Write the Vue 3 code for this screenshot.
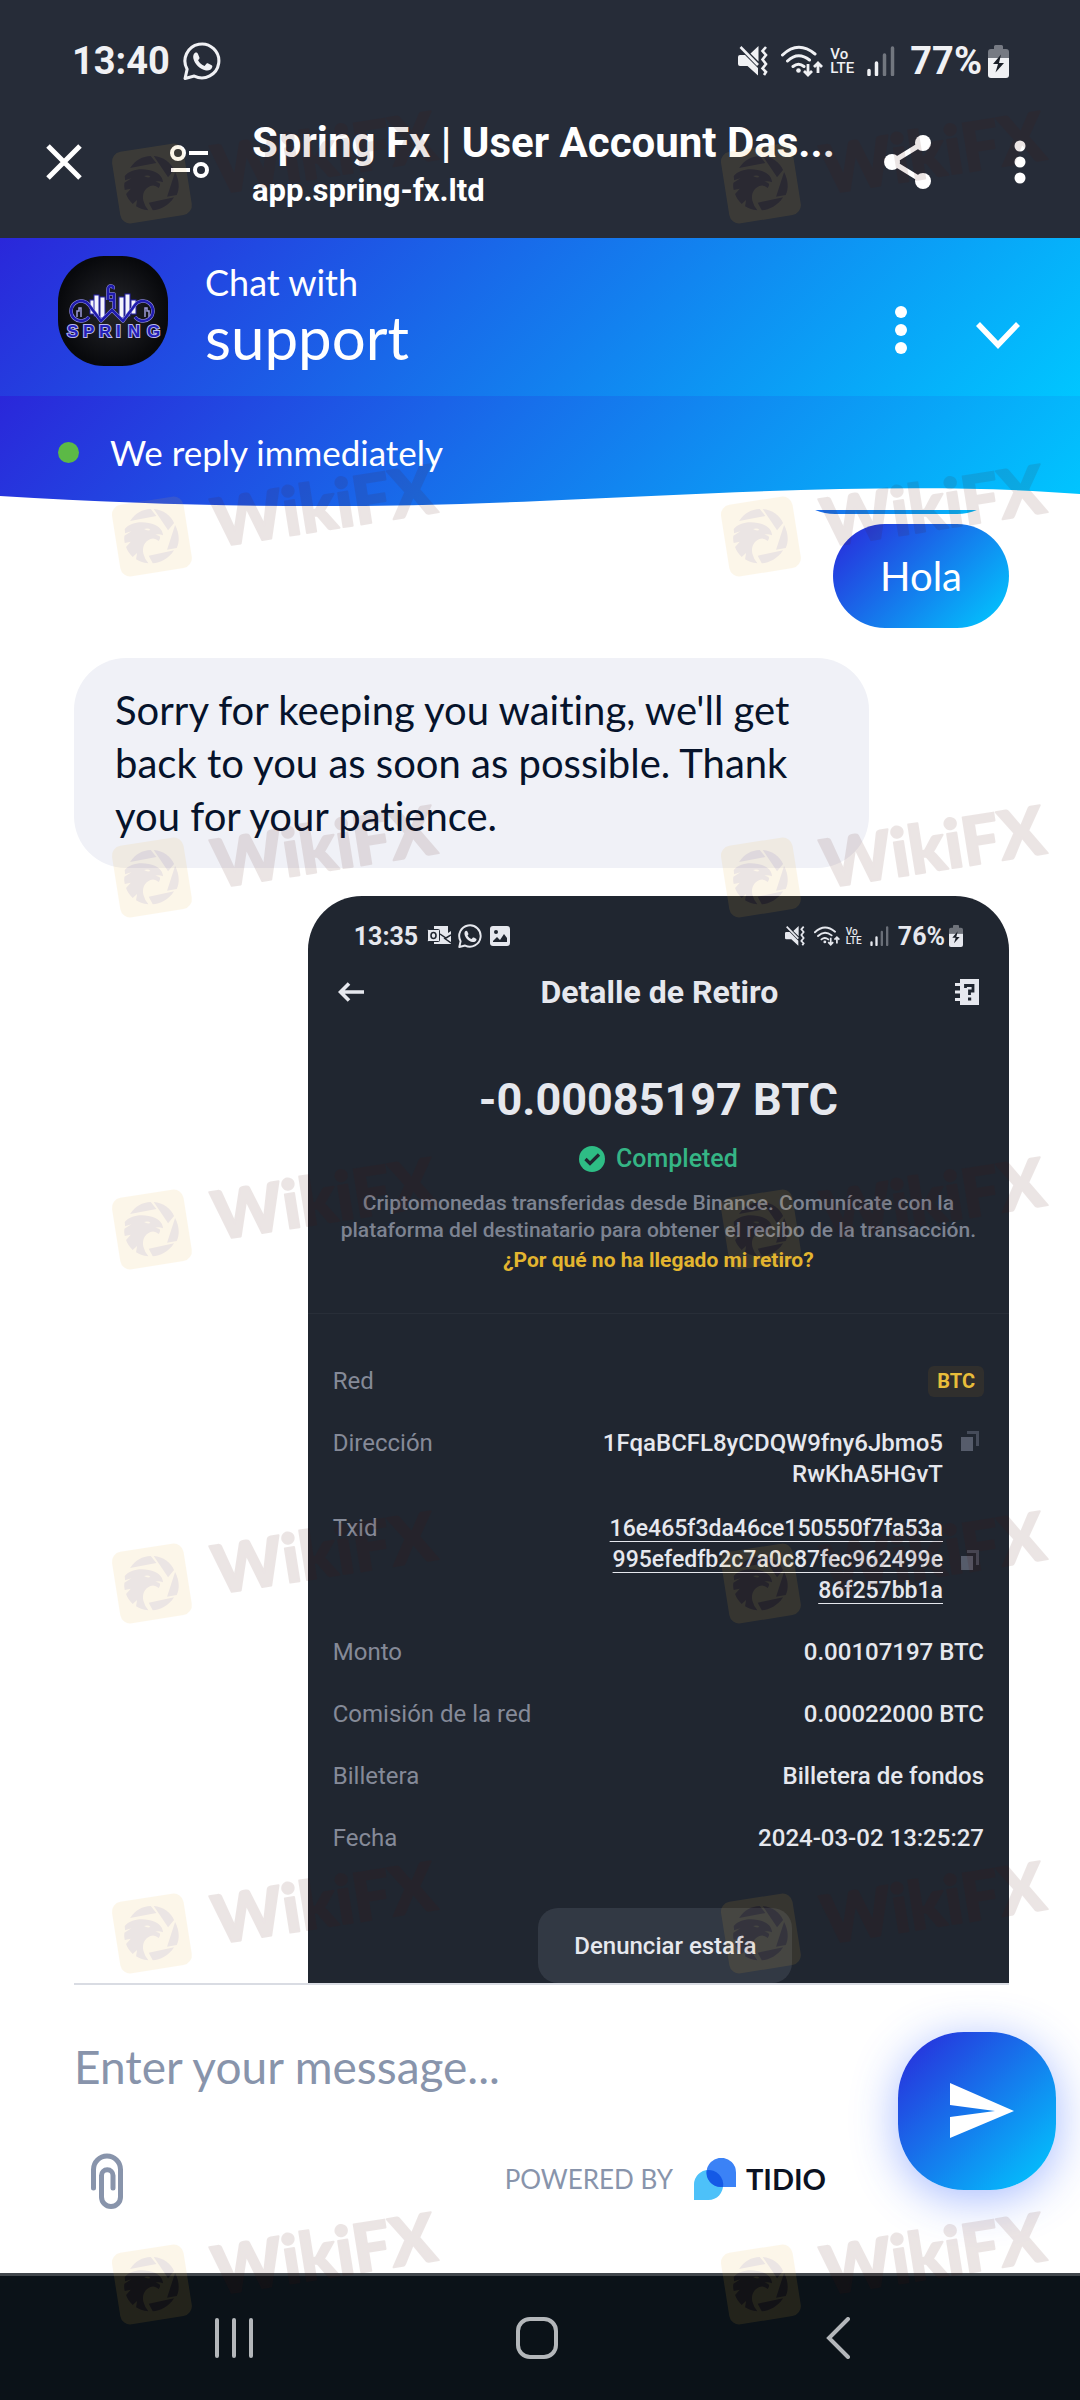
<script setup>
import { ref } from 'vue'

const message = ref('')

const bars = [
  { x: 32, y: 44, h: 14 },
  { x: 36, y: 39, h: 21 },
  { x: 42, y: 41, h: 21 },
  { x: 61, y: 41, h: 21 },
  { x: 67, y: 38, h: 22 },
  { x: 73, y: 44, h: 14 },
]

const rows = [
  { label: 'Monto', value: '0.00107197 BTC' },
  { label: 'Comisión de la red', value: '0.00022000 BTC' },
  { label: 'Billetera', value: 'Billetera de fondos' },
  { label: 'Fecha', value: '2024-03-02 13:25:27' },
]

const marks = [110, 463, 804, 1156, 1510, 1860, 2211].flatMap((top) =>
  [111, 720].map((left) => ({ top, left })),
)
</script>

<template>
  <div class="phone">
    <svg width="0" height="0" class="defs" aria-hidden="true">
      <symbol id="whatsapp" viewBox="0 0 37 37">
        <path d="M2 35.500 4 26.500A16.500 16.500 0 1 1 11 33.200Z" fill="none" stroke="currentColor" stroke-width="3" stroke-linejoin="round" />
        <path d="M10.500 12c1-2 3-2.500 4-.5l1.500 3.500c.3 1-.5 1.800-1.300 2.700 1.500 2.800 3.500 4.500 6.300 5.600l2-2.300c.6-.5 1-.4 1.600-.1l3.300 1.700c.8.5.8 1 .5 2-.8 2.500-3.500 3.600-6 3.100-6.500-1.400-11-6.300-12.300-11.700-.3-1.500-.2-2.900.4-4z" fill="currentColor" />
      </symbol>
      <symbol id="mute" viewBox="0 0 30 30">
        <path d="M2 9h5l13 13v7.500L9.500 20H2q-2 0-2-2v-7q0-2 2-2zM20.500 0v15.500L12.500 7.500z" fill="currentColor" />
        <path d="M2.500 1 20 19" stroke="currentColor" stroke-width="2.600" />
        <path d="m28 1-3.500 4 3.500 4-3.500 4.500L28 18l-3.500 4.500L28 26l-2 3" fill="none" stroke="currentColor" stroke-width="2.600" />
      </symbol>
      <symbol id="wifi" viewBox="0 0 42 32">
        <path d="M1.500 10Q17 -5 34 9M6.500 16Q17 6 28.500 15M12 21.500q5.500-4.500 11 0" fill="none" stroke="currentColor" stroke-width="3" stroke-linecap="round" />
        <circle cx="17.500" cy="25.500" r="2.300" fill="currentColor" />
        <path d="M27 19v11m-4-4 4 4 4-4M37 28V18m-4 4 4-4 4 4" fill="none" stroke="currentColor" stroke-width="2.800" />
      </symbol>
      <symbol id="signal" viewBox="0 0 28 30">
        <path d="M2 24.500v4M9.500 17v11.500" stroke="currentColor" stroke-width="3.500" stroke-linecap="round" />
        <path d="M17.500 9v19.500M25.500 2v26.500" stroke="currentColor" stroke-opacity=".38" stroke-width="3.500" stroke-linecap="round" />
      </symbol>
      <symbol id="battery" viewBox="0 0 21 33">
        <path d="M0 13V7q0-3 3-3h3V1.500Q6 0 7.500 0h6Q15 0 15 1.500V4h3q3 0 3 3v6z" fill="currentColor" opacity=".4" />
        <path d="M0 13h21v17q0 3-3 3H3q-3 0-3-3z" fill="currentColor" />
        <path d="M13 9.500 5 19h5l-2.500 8.500L16 18h-5z" fill="#1a1f28" />
      </symbol>
      <symbol id="copy" viewBox="0 0 18 20">
        <path d="M0 6h12v14H0z" fill="#565c6b" />
        <path d="M6 1.500h10.500V15" fill="none" stroke="#464c5a" stroke-width="3" />
      </symbol>
    </svg>

    <div class="status">
      <span class="time">13:40</span>
      <svg class="wa"><use href="#whatsapp" /></svg>
      <span class="fill"></span>
      <svg class="mute"><use href="#mute" /></svg>
      <svg class="wifi"><use href="#wifi" /></svg>
      <span class="volte"><span>Vo</span><span>LTE</span></span>
      <svg class="signal"><use href="#signal" /></svg>
      <span class="percent">77%</span>
      <svg class="battery"><use href="#battery" /></svg>
    </div>

    <header class="toolbar">
      <button class="close" aria-label="Close">
        <svg width="36" height="36" viewBox="0 0 36 36"><path d="M2 2l32 32M34 2 2 34" stroke="#fff" stroke-width="5" /></svg>
      </button>
      <button class="tune" aria-label="Site settings">
        <svg width="39" height="34" viewBox="0 0 39 34" fill="none" stroke="#fff" stroke-width="4">
          <circle cx="8" cy="8" r="6" /><circle cx="31" cy="25" r="6" /><path d="M19 8h19M1 25h19" />
        </svg>
      </button>
      <div class="page">
        <div class="page-title">Spring Fx | User Account Das...</div>
        <div class="page-url">app.spring-fx.ltd</div>
      </div>
      <button class="share" aria-label="Share">
        <svg width="47" height="54" viewBox="0 0 47 54" fill="#fff">
          <path d="M39 8 8 27l31 19" fill="none" stroke="#fff" stroke-width="5" />
          <circle cx="39" cy="8" r="8" /><circle cx="8" cy="27" r="8" /><circle cx="39" cy="46" r="8" />
        </svg>
      </button>
      <button class="more" aria-label="More">
        <svg width="12" height="44" viewBox="0 0 12 44" fill="#fff"><circle cx="6" cy="6" r="5.500" /><circle cx="6" cy="22" r="5.500" /><circle cx="6" cy="38" r="5.500" /></svg>
      </button>
    </header>

    <section class="chat-head">
      <svg class="avatar" viewBox="0 0 110 110" role="img" aria-label="Spring">
        <defs>
          <radialGradient id="av"><stop offset="0" stop-color="#25262b" /><stop offset="1" stop-color="#08090c" /></radialGradient>
        </defs>
        <rect width="110" height="110" fill="url(#av)" />
        <g fill="#f4f4fa" stroke="#2420a8" stroke-width="1">
          <rect v-for="b in bars" :key="b.x" :x="b.x" :y="b.y" width="5" :height="b.h" />
        </g>
        <path d="M19 61v-6h2v-3h2v9M91 61v-6h-2v-3h-2v9" fill="none" stroke="#9d9ad8" stroke-width="1.500" />
        <g fill="none" stroke-linejoin="round">
          <g stroke="#9c9ae0" stroke-width="3.500">
            <path d="M31 61A10 10 0 1 1 31 49L43 65 54 54 65 65 77 49A10 10 0 1 1 77 61" />
            <path d="M50 44v-10q0-4 3-4t2 3M51 38h5v15M51 44h5" />
          </g>
          <g stroke="#201cae" stroke-width="2.500">
            <path d="M31 61A10 10 0 1 1 31 49L43 65 54 54 65 65 77 49A10 10 0 1 1 77 61" />
            <path d="M50 44v-10q0-4 3-4t2 3M51 38h5v15M51 44h5" />
          </g>
        </g>
        <text class="avatar-name" x="9 25 41 58 70 89" y="81">SPRING</text>
      </svg>
      <div class="who">
        <div class="who-small">Chat with</div>
        <div class="who-big">support</div>
      </div>
      <button class="opts" aria-label="Options">
        <svg width="12" height="48" viewBox="0 0 12 48" fill="#fff"><circle cx="6" cy="6" r="6" /><circle cx="6" cy="24" r="6" /><circle cx="6" cy="42" r="6" /></svg>
      </button>
      <button class="minimise" aria-label="Minimise">
        <svg width="44" height="28" viewBox="0 0 44 28"><path d="m2 2 20 21L42 2" fill="none" stroke="#fff" stroke-width="5.500" /></svg>
      </button>
    </section>

    <section class="reply">
      <span class="dot"></span>
      <span>We reply immediately</span>
      <svg class="wave" viewBox="0 0 1080 20" preserveAspectRatio="none" aria-hidden="true">
        <path d="M0 9C200 21 360 22 540 14S920 -6 1080 7V20H0Z" fill="#fff" />
      </svg>
    </section>

    <main class="messages">
      <div class="earlier"><div class="bubble mine"></div></div>
      <div class="bubble mine hola">Hola</div>
      <div class="bubble theirs">Sorry for keeping you waiting, we'll get back to you as soon as possible. Thank you for your patience.</div>

      <article class="receipt">
        <div class="mini-status">
          <span class="mini-time">13:35</span>
          <svg class="outlook" width="24" height="20" viewBox="0 0 24 20">
            <path d="M7 0h14v7l3-2v13H7z" fill="#e6e8ee" /><path d="M13 8l6 4 5-3M24 17l-7-5" stroke="#202630" stroke-width="1.500" fill="none" />
            <rect x=".5" y="3.500" width="12" height="12" rx="1" fill="#e6e8ee" stroke="#202630" /><ellipse cx="6.500" cy="9.500" rx="2.500" ry="3" fill="none" stroke="#202630" stroke-width="1.600" />
          </svg>
          <svg class="mini-wa"><use href="#whatsapp" /></svg>
          <svg width="20" height="20" viewBox="0 0 20 20"><rect width="20" height="20" rx="3" fill="#e6e8ee" /><path d="M3 15l4-4 3 3 4-6 3 4v4H3z" fill="#202630" /><circle cx="6" cy="6" r="2" fill="#202630" /></svg>
          <span class="fill"></span>
          <svg class="mini-mute"><use href="#mute" /></svg>
          <svg class="mini-wifi"><use href="#wifi" /></svg>
          <span class="mini-volte"><span>Vo</span><span>LTE</span></span>
          <svg class="mini-signal"><use href="#signal" /></svg>
          <span class="mini-percent">76%</span>
          <svg class="mini-battery"><use href="#battery" /></svg>
        </div>
        <div class="receipt-bar">
          <svg width="26" height="20" viewBox="0 0 26 20"><path d="M26 10H3M11 1.500 2.500 10l8.500 8.500" fill="none" stroke="#e6e8ee" stroke-width="3.600" /></svg>
          <h2>Detalle de Retiro</h2>
          <svg width="24" height="26" viewBox="0 0 24 26">
            <path d="M5 0h19v26H5v-4H0v-3h5v-4.500H0v-3h5V7H0V4h5z" fill="#e6e8ee" />
            <path d="M10.500 9V6.500h7.500V12h-3.500v4" fill="none" stroke="#202630" stroke-width="2.800" /><path d="M13 18.500h3.200v3H13z" fill="#202630" />
          </svg>
        </div>
        <div class="amount">-0.00085197 BTC</div>
        <div class="done">
          <svg width="26" height="26" viewBox="0 0 26 26"><circle cx="13" cy="13" r="13" fill="#2ebd85" /><path d="m6.500 13 4.500 4.500 9-9" fill="none" stroke="#202630" stroke-width="3.200" /></svg>
          <span>Completed</span>
        </div>
        <p class="note">Criptomonedas transferidas desde Binance. Comunícate con la<br />plataforma del destinatario para obtener el recibo de la transacción.</p>
        <a class="why" href="#">¿Por qué no ha llegado mi retiro?</a>
        <dl class="details">
          <div class="row"><dt>Red</dt><dd><span class="badge">BTC</span></dd></div>
          <div class="row address">
            <dt>Dirección</dt>
            <dd class="long">1FqaBCFL8yCDQW9fny6Jbmo5<br />RwKhA5HGvT</dd>
            <svg class="copy"><use href="#copy" /></svg>
          </div>
          <div class="row txid">
            <dt>Txid</dt>
            <dd class="long"><a href="#">16e465f3da46ce150550f7fa53a<br />995efedfb2c7a0c87fec962499e<br />86f257bb1a</a></dd>
            <svg class="copy"><use href="#copy" /></svg>
          </div>
          <div v-for="r in rows" :key="r.label" class="row"><dt>{{ r.label }}</dt><dd>{{ r.value }}</dd></div>
        </dl>
        <button class="report">Denunciar estafa</button>
      </article>
    </main>

    <form class="composer" @submit.prevent>
      <div class="compose-main">
        <input v-model="message" type="text" placeholder="Enter your message..." aria-label="Enter your message" />
        <div class="tools">
          <button type="button" class="attach" aria-label="Attach file">
            <svg width="32" height="56" viewBox="0 0 32 56"><path d="M2.500 35V16.500a13.500 13.500 0 0 1 27 0V44a9.500 9.500 0 0 1-19 0V22.500a5.700 5.700 0 0 1 11.500 0V35" fill="none" stroke="#8894ab" stroke-width="5" stroke-linecap="round" /></svg>
          </button>
          <a class="powered" href="#">
            <span>POWERED BY</span>
            <svg width="42" height="42" viewBox="0 0 42 42">
              <path d="M0 42V26.500a14.500 14.500 0 0 1 29 0A14.500 14.500 0 0 1 14.500 42z" fill="#4dc1f9" />
              <path d="M42 29V14.500a14.700 14.700 0 1 0-29.400 0A14.500 14.500 0 0 0 27 29z" fill="#3b82f6" />
              <path d="M12.600 12.200A14.500 14.500 0 0 1 29 29h-2A14.500 14.500 0 0 1 12.600 12.200z" fill="#1459e6" />
            </svg>
            <strong>TIDIO</strong>
          </a>
        </div>
      </div>
      <button class="send" aria-label="Send">
        <svg width="64" height="56" viewBox="0 0 64 56"><path d="M0 0 64 28 0 55V34l45-6L0 22z" fill="#fff" /></svg>
      </button>
    </form>

    <nav class="system">
      <button aria-label="Recents"><svg width="38" height="42" viewBox="0 0 38 42"><path d="M2 3v36M19 3v36M36 3v36" stroke="#b4b7ba" stroke-width="4" stroke-linecap="round" /></svg></button>
      <button aria-label="Home"><svg width="42" height="42" viewBox="0 0 42 42"><rect x="2" y="2" width="38" height="38" rx="12" fill="none" stroke="#b4b7ba" stroke-width="4" /></svg></button>
      <button aria-label="Back"><svg width="30" height="42" viewBox="0 0 30 42"><path d="M28 2 9 21l19 19" fill="none" stroke="#b4b7ba" stroke-width="4" stroke-linecap="round" /></svg></button>
    </nav>

    <div class="watermarks" aria-hidden="true">
      <svg v-for="m in marks" :key="m.top + '-' + m.left" class="mark" viewBox="0 0 332 120" :style="{ top: m.top + 'px', left: m.left + 'px' }">
        <g transform="translate(-21.600 -16) scale(.33333)">
          <rect x="79" y="160" width="217" height="217" rx="30" transform="rotate(-9 187 268)" fill="#ecb337" />
          <g fill="#50120a">
            <path d="M122 222C138 198 158 187 184 186L201 207Z" />
            <path d="M193 186C222 189 244 205 254 228L236 250Z" />
            <path d="M257 234C270 258 271 285 262 303L233 308Z" />
            <path d="M254 310C238 335 212 348 190 349L178 326Z" />
            <path d="M106 246C120 228 150 222 178 228C205 232 220 247 221 265Q208 260 198 263C216 266 214 272 208 282Q196 271 183 276C164 284 158 302 162 320Q166 336 177 349C160 348 148 342 140 337L143 318 130 330C120 320 113 310 110 300L124 284 106 288Q103 276 105 266L126 253 107 259Z" />
          </g>
          <path d="M164 246q14-4 19 3-9 4-19-3z" fill="#ecb337" />
        </g>
        <text class="mark-text" x="213" y="67" text-anchor="middle" transform="rotate(-9 213 44)">WikiFX</text>
      </svg>
    </div>
  </div>
</template>

<style>
body {
  margin: 0;
  background: #fff;
}
</style>

<style scoped>
.phone {
  position: relative;
  display: flex;
  flex-direction: column;
  min-height: 100vh;
  overflow: hidden;
  background: #fff;
  font-family: Lato, "Open Sans", sans-serif;
  font-variant-ligatures: none;
}
.defs {
  position: absolute;
}
button {
  display: flex;
  padding: 0;
  border: 0;
  background: none;
  cursor: pointer;
}
svg {
  display: block;
  flex: none;
}
.fill {
  flex: 1;
}

/* system status bar */
.status {
  display: flex;
  align-items: center;
  height: 42px;
  padding: 40px 71px 0 72px;
  background: #262c38;
  color: #f0f1f4;
  font: 700 38px/42px Roboto, sans-serif;
}
.wa {
  width: 38px;
  height: 38px;
  margin-left: 13px;
}
.mute {
  width: 30px;
  height: 30px;
  margin-right: 13px;
}
.wifi {
  width: 42px;
  height: 32px;
  margin-right: 7px;
}
.volte {
  display: flex;
  flex-direction: column;
  width: 26px;
  margin-right: 11px;
  font: 500 15px/14px Roboto, sans-serif;
}
.signal {
  width: 28px;
  height: 30px;
  margin-right: 15px;
}
.battery {
  width: 21px;
  height: 33px;
  margin-left: 6px;
}

/* browser toolbar */
.toolbar {
  display: flex;
  align-items: center;
  height: 152px;
  padding: 4px 54px 0 46px;
  background: #262c38;
  color: #fff;
  font-family: Roboto, sans-serif;
}
.tune {
  margin-left: 88px;
}
.page {
  flex: 1;
  min-width: 0;
  margin-left: 43px;
  padding-top: 4px;
  white-space: nowrap;
}
.page-title {
  font-weight: 700;
  font-size: 42px;
  line-height: 52px;
}
.page-url {
  padding-top: 2px;
  font-weight: 700;
  font-size: 31px;
  line-height: 40px;
}
.more {
  margin-left: 83px;
}

/* chat header */
.chat-head {
  display: flex;
  align-items: flex-start;
  height: 140px;
  padding: 18px 60px 0 58px;
  background: linear-gradient(135deg, #2a27da, #00c6ff);
  color: #fff;
}
.avatar {
  width: 110px;
  height: 110px;
  border-radius: 46px;
}
.avatar-name {
  font: 700 17px "Liberation Sans", sans-serif;
  fill: #2420b8;
  stroke: #b9b8ee;
  stroke-width: 2px;
  paint-order: stroke;
}
.who {
  flex: 1;
  margin-left: 37px;
  padding-top: 4px;
}
.who-small {
  font-size: 36px;
  line-height: 44px;
}
.who-big {
  font-size: 60px;
  line-height: 66px;
}
.opts {
  margin-top: 50px;
}
.minimise {
  margin-top: 66px;
  margin-left: 69px;
}
.reply {
  position: relative;
  display: flex;
  align-items: center;
  padding: 34px 58px 32px;
  background: linear-gradient(135deg, #2a27da, #00c6ff);
  color: #fff;
  font-size: 35px;
  line-height: 44px;
}
.dot {
  width: 21px;
  height: 21px;
  margin-right: 31px;
  border-radius: 50%;
  background: #5cb946;
}
.wave {
  position: absolute;
  bottom: -1px;
  left: 0;
  width: 100%;
  height: 20px;
}

/* conversation */
.messages {
  display: flex;
  flex-direction: column;
  align-items: flex-end;
  margin: 4px 71px 0 74px;
  border-bottom: 2px solid #d9dce3;
}
.bubble {
  box-sizing: border-box;
  padding: 26px 41px 25px;
  border-radius: 52px;
  font-size: 40px;
  line-height: 53px;
}
.mine {
  min-width: 176px;
  background: linear-gradient(135deg, #2a27da, #00ccff);
  color: #fff;
  text-align: center;
}
.earlier {
  display: flex;
  align-items: flex-end;
  height: 4px;
  overflow: hidden;
}
.earlier .bubble {
  width: 226px;
  height: 105px;
}
.hola {
  margin-top: 10px;
}
.theirs {
  align-self: flex-start;
  width: 85%;
  margin: 30px 0 28px;
  background: #f0f1f7;
  color: #06132b;
}

/* receipt picture */
.receipt {
  display: flex;
  flex-direction: column;
  align-items: center;
  box-sizing: border-box;
  width: 75%;
  padding-top: 26px;
  border-radius: 54px 54px 0 0;
  background: #202630;
  color: #e6e8ee;
  font-family: Roboto, sans-serif;
}
.mini-status {
  display: flex;
  align-items: center;
  align-self: stretch;
  height: 28px;
  padding: 0 46px 0 46px;
  font-weight: 700;
  font-size: 25px;
}
.outlook {
  margin-left: 9px;
}
.mini-wa {
  width: 24px;
  height: 24px;
  margin: 0 8px 0 7px;
}
.mini-mute {
  width: 20px;
  height: 20px;
  margin-right: 9px;
}
.mini-wifi {
  width: 26px;
  height: 20px;
  margin-right: 6px;
}
.mini-volte {
  display: flex;
  flex-direction: column;
  width: 17px;
  margin-right: 7px;
  font-weight: 500;
  font-size: 10px;
  line-height: 9px;
}
.mini-signal {
  width: 19px;
  height: 20px;
  margin-right: 9px;
}
.mini-battery {
  width: 14px;
  height: 22px;
  margin-left: 4px;
}
.receipt-bar {
  display: flex;
  align-items: center;
  justify-content: space-between;
  align-self: stretch;
  height: 40px;
  margin-top: 22px;
  padding: 0 30px;
}
h2 {
  margin: 0;
  font-weight: 700;
  font-size: 32px;
  line-height: 40px;
}
.amount {
  margin-top: 60px;
  font-weight: 700;
  font-size: 45px;
  line-height: 56px;
}
.done {
  display: flex;
  align-items: center;
  gap: 11px;
  margin-top: 15px;
  color: #35b585;
  font-weight: 500;
  font-size: 25px;
  line-height: 32px;
}
.note {
  margin: 15px 0 0;
  color: #7d8391;
  font-weight: 500;
  font-size: 21px;
  line-height: 27px;
  text-align: center;
  white-space: nowrap;
}
.why {
  margin-top: 2px;
  color: #e3b52f;
  font-weight: 700;
  font-size: 21px;
  line-height: 29px;
  text-decoration: none;
}
.details {
  align-self: stretch;
  margin: 38px 0 0;
  padding: 52px 25px 0;
  border-top: 1px solid #282e38;
  font-size: 24px;
  line-height: 31px;
}
.row {
  display: flex;
  align-items: flex-start;
  margin-bottom: 31px;
}
dt {
  flex: 1;
  color: #858a98;
}
dd {
  margin: 0;
  font-weight: 500;
  text-align: right;
}
.address {
  margin-bottom: 23px;
}
.badge {
  display: block;
  padding: 0 9px;
  border-radius: 6px;
  background: #302f2d;
  color: #e8bd3a;
  font-weight: 700;
  font-size: 20px;
}
.long {
  margin-right: 18px;
}
.txid .long {
  font-size: 23px;
}
.long a {
  color: inherit;
  text-underline-offset: 5px;
  text-decoration-thickness: 1px;
}
.copy {
  width: 18px;
  height: 20px;
  margin: 3px 5px 0 0;
}
.txid .copy {
  align-self: center;
  margin-top: 0;
}
.report {
  height: 75px;
  margin: 23px 0 0 14px;
  padding: 0 36px;
  align-items: center;
  border-radius: 20px;
  background: #323944;
  color: #e6e8ee;
  font: 500 24px/32px Roboto, sans-serif;
}

/* composer */
.composer {
  display: flex;
  align-items: flex-start;
  padding: 47px 24px 64px 74px;
}
.compose-main {
  flex: 1;
  padding-top: 7px;
}
input {
  display: block;
  box-sizing: border-box;
  width: 100%;
  height: 56px;
  padding: 0;
  border: 0;
  outline: 0;
  background: none;
  color: #06132b;
  font: 46px/56px Lato, "Open Sans", sans-serif;
}
input::placeholder {
  color: #8894ab;
  opacity: 1;
}
.tools {
  display: flex;
  align-items: center;
  justify-content: space-between;
  margin-top: 58px;
  padding: 0 72px 0 17px;
}
.powered {
  display: flex;
  align-items: center;
  margin-bottom: 4px;
  color: #8894ab;
  font-size: 26px;
  line-height: 36px;
  text-decoration: none;
}
.powered svg {
  margin: 0 10px 0 21px;
}
.powered strong {
  color: #0b1222;
  font-size: 29px;
}
.send {
  align-items: center;
  justify-content: center;
  width: 158px;
  height: 158px;
  padding-left: 10px;
  border-radius: 66px;
  background: linear-gradient(135deg, #2a27da, #00ccff);
  box-shadow: 0 8px 46px rgba(40, 90, 255, 0.42);
}

/* system navigation */
.system {
  display: flex;
  flex: 1;
  align-items: center;
  justify-content: space-between;
  min-height: 123px;
  padding: 0 230px 0 215px;
  border-top: 3px solid #42474c;
  box-sizing: border-box;
  background: #0b1218;
}

/* watermark layer */
.watermarks {
  position: absolute;
  inset: 0;
  overflow: hidden;
  pointer-events: none;
}
.mark {
  position: absolute;
  width: 332px;
  height: 120px;
  overflow: visible;
  opacity: 0.105;
}
.mark-text {
  font: 900 67px Lato, sans-serif;
  fill: #50120a;
  stroke: #50120a;
  stroke-width: 2px;
  stroke-linejoin: round;
}
</style>
